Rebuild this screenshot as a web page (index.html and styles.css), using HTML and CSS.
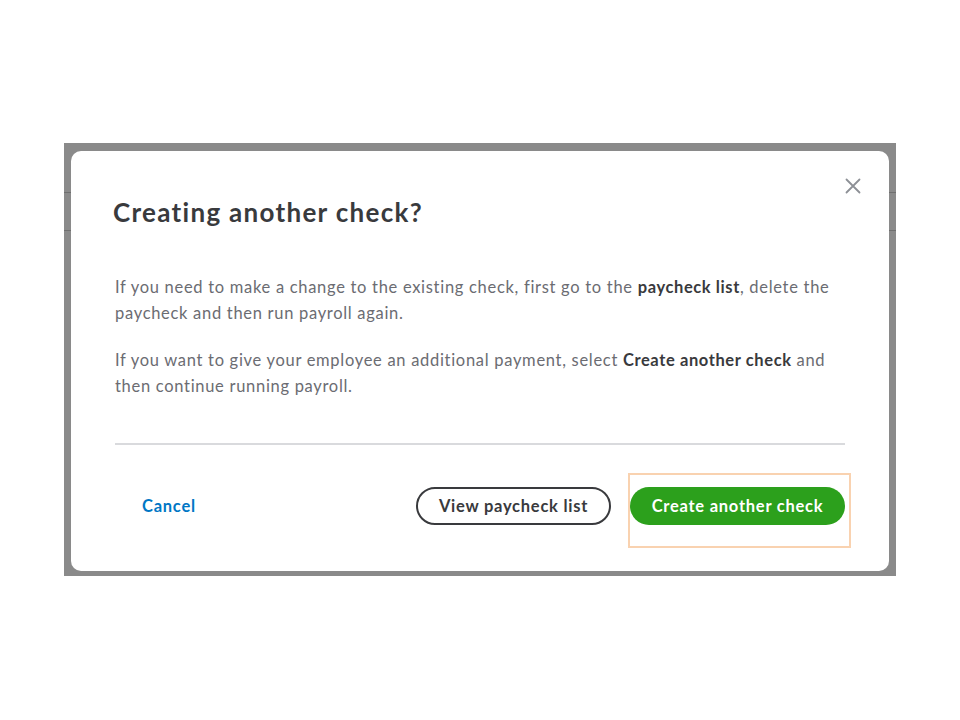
FILE: index.html
```html
<!DOCTYPE html>
<html lang="en">
<head>
<meta charset="utf-8">
<title>Creating another check?</title>
<link rel="stylesheet" href="styles.css">
</head>
<body>
<div class="backdrop">
  <div class="bg-line bg-line-1"></div>
  <div class="bg-line bg-line-2"></div>
  <div class="dialog">
    <button class="close" aria-label="Close">
      <svg width="16" height="16" viewBox="0 0 16 16"><path d="M1.5 1.5 L14.5 14.5 M14.5 1.5 L1.5 14.5" stroke="#8d9096" stroke-width="1.8" stroke-linecap="round" fill="none"/></svg>
    </button>
    <h1 class="title">Creating another check?</h1>
    <div class="body">
      <p>If you need to make a change to the existing check, first go to the <b>paycheck list</b>, delete the paycheck and then run payroll again.</p>
      <p>If you want to give your employee an additional payment, select <b>Create another check</b> and then continue running payroll.</p>
    </div>
    <div class="divider"></div>
    <div class="footer">
      <button class="btn-link">Cancel</button>
      <div class="actions">
        <button class="btn-outline">View paycheck list</button>
        <div class="highlight-wrap">
          <button class="btn-primary">Create another check</button>
          <div class="highlight"></div>
        </div>
      </div>
    </div>
  </div>
</div>
</body>
</html>
```
FILE: styles.css
```css
* { box-sizing: border-box; }
html, body { margin: 0; padding: 0; background: #ffffff; }
body { font-family: "Lato", "Open Sans", sans-serif; }

.backdrop {
  position: relative;
  margin: 143px 0 0 64px;
  width: 832px;
  height: 433px;
  background: #8a8a8a;
  padding: 8px 7px 5px 7px;
}
.bg-line {
  position: absolute;
  left: 0;
  right: 0;
  height: 1px;
  background: #6f6f6f;
}
.bg-line-1 { top: 49px; }
.bg-line-2 { top: 87px; }

.dialog {
  position: relative;
  height: 420px;
  background: #ffffff;
  border-radius: 10px;
  padding: 0 44px 0 43px;
  display: flex;
  flex-direction: column;
}
.close {
  position: absolute;
  top: 27px;
  right: 28px;
  border: 0;
  background: none;
  padding: 0;
  width: 16px;
  height: 16px;
  cursor: pointer;
}
.close svg { display: block; }

.title {
  margin: 45px 0 0 -1px;
  font-size: 26px;
  line-height: 32px;
  font-weight: 700;
  letter-spacing: 1.3px;
  color: #393a3d;
}
.body {
  margin-top: 46px;
  padding-left: 1px;
}
.body p {
  margin: 0 0 21px 0;
  font-size: 16.5px;
  line-height: 26px;
  letter-spacing: 0.7px;
  color: #6b6c72;
}
.body p:last-child { margin-bottom: 0; }
.body b { color: #393a3d; font-weight: 700; letter-spacing: 0.6px; }

.divider {
  margin-top: 44px;
  margin-left: 1px;
  height: 2px;
  background: #d9dadd;
}
.footer {
  margin-top: 42px;
  display: flex;
  align-items: center;
  justify-content: space-between;
}
.btn-link, .btn-outline, .btn-primary {
  font-family: inherit;
  font-size: 16.5px;
  font-weight: 700;
  letter-spacing: 0.75px;
  cursor: pointer;
}
.btn-link {
  border: 0;
  background: none;
  color: #0077c5;
  padding: 0;
  margin-left: 28px;
}
.actions {
  display: flex;
  align-items: center;
  gap: 19px;
}
.btn-outline, .btn-primary {
  height: 38px;
  border-radius: 19px;
  padding: 0;
}
.btn-outline {
  background: #ffffff;
  border: 2px solid #393a3d;
  color: #393a3d;
  width: 195px;
}
.btn-primary {
  background: #2ca01c;
  border: 0;
  color: #ffffff;
  width: 215px;
}
.highlight-wrap { position: relative; }
.highlight {
  position: absolute;
  left: -2px;
  right: -6px;
  top: -14px;
  bottom: -23px;
  border: 2px solid #f9d2b0;
  pointer-events: none;
}
```
